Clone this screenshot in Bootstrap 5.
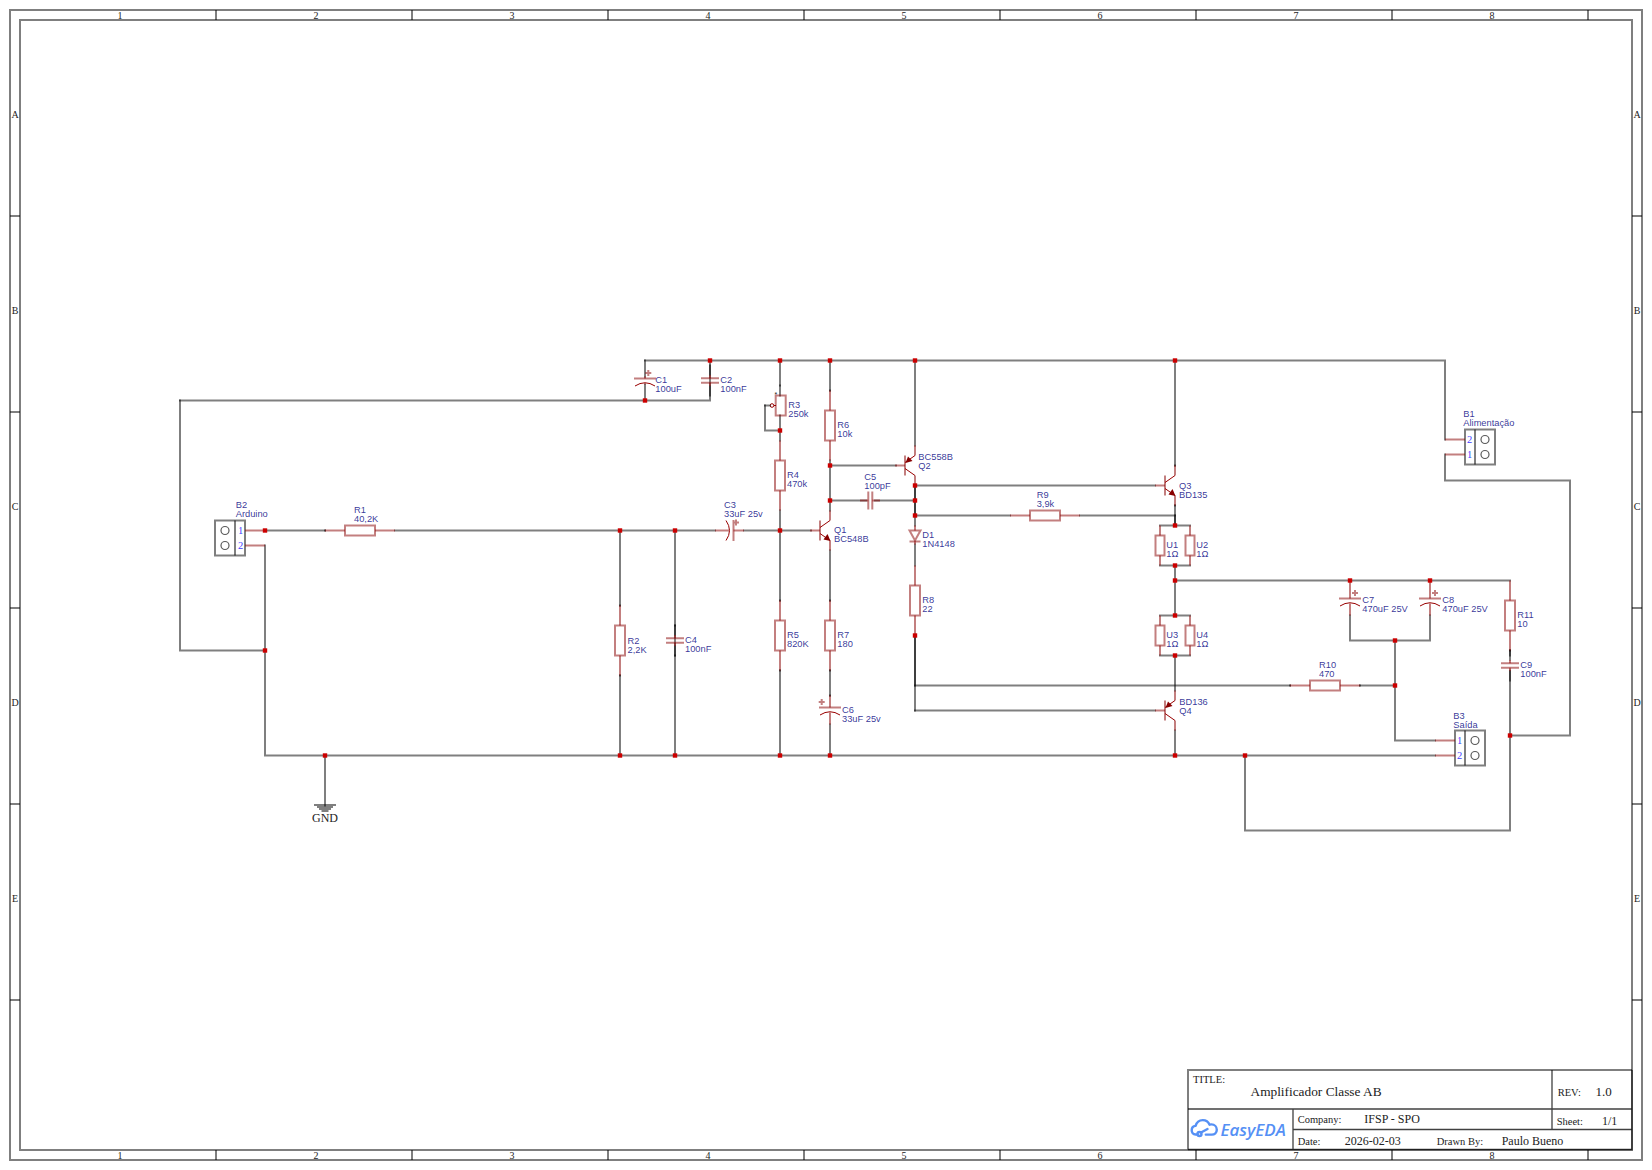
<!DOCTYPE html>
<html lang="pt">
<head>
  <meta charset="UTF-8" />
  <title>Amplificador Classe AB</title>
  <link href="https://cdn.jsdelivr.net/npm/bootstrap@5.3.3/dist/css/bootstrap.min.css" rel="stylesheet"/>
  <style>
    .sheet-svg { width: 1652px; height: 1170px; }
    .wire { stroke: #000; stroke-opacity: .5; stroke-width: 2; fill: none; stroke-linecap: square; }
    .pin { stroke: #800; stroke-opacity: .5; stroke-width: 2; fill: none; }
    .body-line { stroke: #800; stroke-opacity: .5; stroke-width: 2; fill: none; }
    .thin-line { stroke: #900; stroke-width: 1; fill: none; }
    .node { fill: #c00; }
    .frame-line { stroke: #000; stroke-opacity: .5; stroke-width: 2; fill: none; }
    .block-line { stroke: #000; stroke-opacity: .75; stroke-width: 1.3; fill: none; }
    .part-label { font: 9.3px "Liberation Sans", Arial, sans-serif; fill: #000080; fill-opacity: .8; }
    .pin-num { font: 10.5px "Liberation Serif", serif; fill: #00f; fill-opacity: .8; text-anchor: middle; }
    .sheet-text { font-family: "Liberation Serif", serif; fill: #222; }
    .logo-text { font: italic 600 17px "Open Sans", sans-serif; fill: #5590f5; }
  </style>
</head>
<body class="m-0 bg-white overflow-hidden">
  <svg class="sheet-svg d-block" id="sheet" viewBox="0 0 1652 1170" xmlns="http://www.w3.org/2000/svg">
    <g id="frame"></g>
    <g transform="translate(0 .5)">
      <g id="wires"></g>
      <g id="parts"></g>
      <g id="nodes"></g>
    </g>
    <g id="labels" transform="translate(0 .5)"></g>
    <g id="title-block" transform="translate(0 .5)">
      <path class="frame-line" d="M1188 1149V1069.5H1632"/>
      <path class="block-line" d="M1188 1149H1632V1069.5M1188 1108.5H1632M1293 1108.5V1149M1293 1129H1632M1552 1069.5V1129"/>
      <text class="sheet-text" x="1193" y="1082" font-size="10.5">TITLE:</text>
      <text class="sheet-text" x="1250.5" y="1095.5" font-size="13.33">Amplificador Classe AB</text>
      <text class="sheet-text" x="1557.7" y="1095.5" font-size="10.5">REV:</text>
      <text class="sheet-text" x="1595.5" y="1095.5" font-size="13">1.0</text>
      <text class="sheet-text" x="1297.7" y="1122" font-size="10.5">Company:</text>
      <text class="sheet-text" x="1364.3" y="1122" font-size="12">IFSP - SPO</text>
      <text class="sheet-text" x="1556.7" y="1124" font-size="10.5">Sheet:</text>
      <text class="sheet-text" x="1602" y="1124" font-size="12">1/1</text>
      <text class="sheet-text" x="1297.7" y="1144" font-size="10.5">Date:</text>
      <text class="sheet-text" x="1344.7" y="1144" font-size="12">2026-02-03</text>
      <text class="sheet-text" x="1436.7" y="1144" font-size="10.5">Drawn By:</text>
      <text class="sheet-text" x="1501.7" y="1144" font-size="12">Paulo Bueno</text>
      <!-- EasyEDA logo -->
      <g fill="none" stroke="#5590f5" stroke-width="2.4" stroke-linecap="round" stroke-linejoin="round">
        <path d="M1197.5 1134h-2c-2.4 0-3.8-2-3.8-4.2 0-2.4 1.6-4.2 3.9-4.4 1-3.6 3.8-5.8 7.2-5.8 3 0 5.6 1.8 6.8 4.6 .6-.2 1.2-.3 1.8-.3 3.2 0 5.4 2.4 5.4 5.4s-2.2 4.8-5 4.8h-6"/>
        <path d="M1201 1132l6.5-3.5"/>
        <circle cx="1199.5" cy="1133.5" r="2"/>
      </g>
      <text class="logo-text" x="1220.5" y="1135.5">EasyEDA</text>
    </g>
  </svg>

  <script src="https://cdn.jsdelivr.net/npm/bootstrap@5.3.3/dist/js/bootstrap.bundle.min.js"></script>
  <script>
    const NS = 'http://www.w3.org/2000/svg';
    const frame = document.getElementById('frame');
    const wires = document.getElementById('wires');
    const parts = document.getElementById('parts');
    const nodes = document.getElementById('nodes');
    const labels = document.getElementById('labels');

    function el(parent, tag, attrs, text) {
      const e = document.createElementNS(NS, tag);
      for (const k in attrs) e.setAttribute(k, attrs[k]);
      if (text !== undefined) e.textContent = text;
      parent.appendChild(e);
      return e;
    }
    const path = (parent, cls, d) => el(parent, 'path', { class: cls, d });

    function label(x, y, a, b) {
      el(labels, 'text', { class: 'part-label', x, y }, a);
      if (b) el(labels, 'text', { class: 'part-label', x, y: y + 9 }, b);
    }

    // sheet frame, ticks and grid letters
    el(frame, 'rect', { class: 'frame-line', x: 10, y: 10, width: 1632, height: 1150 });
    el(frame, 'rect', { class: 'frame-line', x: 20, y: 20, width: 1612, height: 1130 });
    for (let i = 0; i < 8; i++) {
      const x = 216 + i * 196;
      path(frame, 'frame-line', `M${x} 10V20M${x} 1150V1160`);
      el(frame, 'text', { class: 'sheet-text', x: 120 + i * 196, y: 19, 'font-size': 10, 'text-anchor': 'middle' }, i + 1);
      el(frame, 'text', { class: 'sheet-text', x: 120 + i * 196, y: 1159, 'font-size': 10, 'text-anchor': 'middle' }, i + 1);
    }
    'ABCDE'.split('').forEach((c, i) => {
      const y = 216 + i * 196;
      path(frame, 'frame-line', `M10 ${y}H20M1632 ${y}H1642`);
      el(frame, 'text', { class: 'sheet-text', x: 15, y: 118 + i * 196, 'font-size': 10, 'text-anchor': 'middle' }, c);
      el(frame, 'text', { class: 'sheet-text', x: 1637, y: 118 + i * 196, 'font-size': 10, 'text-anchor': 'middle' }, c);
    });

    // wires
    [
      'M645 360H1445V439', 'M1445 454V480H1570V735H1510',
      'M180 400H710V360', 'M180 400V650H265',
      'M265 530H325', 'M395 530H715', 'M744 530H811',
      'M265 545V755H1435', 'M620 530V605', 'M620 675V755',
      'M675 530V755', 'M645 360V376', 'M645 384V400',
      'M780 360V395', 'M780 415V440', 'M780 510V600', 'M780 670V755',
      'M765 405V430H780',
      'M830 360V390', 'M830 460V510', 'M830 550V600', 'M830 670V695', 'M830 724V755',
      'M830 465H896', 'M830 500H866', 'M875 500H915',
      'M915 360V445', 'M915 485V525', 'M915 485V515', 'M915 544V565', 'M915 635V710', 'M915 635V685',
      'M915 485H1155', 'M915 515H1010', 'M1080 515H1175',
      'M1175 360V465', 'M1175 505V525', 'M1175 515V525',
      'M1160 525H1190', 'M1160 565H1190', 'M1175 565V615',
      'M1160 615H1190', 'M1160 655H1190', 'M1175 655V690', 'M1175 730V755',
      'M1175 580H1510', 'M915 685H1290', 'M1360 685H1395', 'M915 710H1155',
      'M1350 615V640H1430V615', 'M1395 640V740H1435',
      'M1245 755V830H1510V670', 'M1510 650V655',
      'M325 755V805'
    ].forEach(d => path(wires, 'wire', d));

    // where a pin end meets a wire the two half-transparent strokes darken
    [[325,530],[620,605],[620,675],[675,625],[675,655],[780,385],[830,390],[780,600],[830,600],[780,670],[830,670],[830,695],
     [1175,465],[1175,505],[1510,650],[1290,685],[1360,685]].forEach(([x, y]) => {
      el(wires, 'rect', { x: x - 1, y: y - 1, width: 2, height: 2, fill: '#000', 'fill-opacity': .5 });
    });

    function resistorV(x, top, h, pin, w) {
      w = w || 10;
      if (pin) path(parts, 'pin', `M${x} ${top - pin}V${top}M${x} ${top + h}V${top + h + pin}`);
      el(parts, 'rect', { class: 'body-line', x: x - w / 2, y: top, width: w, height: h });
    }
    function resistorH(left, y) {
      path(parts, 'pin', `M${left - 20} ${y}H${left}M${left + 30} ${y}H${left + 50}`);
      el(parts, 'rect', { class: 'body-line', x: left, y: y - 5, width: 30, height: 10 });
    }
    function capV(x, y) {
      path(parts, 'pin', `M${x} ${y - 5.5}V${y - 2.3}M${x} ${y + 2.3}V${y + 5.5}`);
      path(parts, 'body-line', `M${x - 9} ${y - 2.3}H${x + 9}M${x - 9} ${y + 2.3}H${x + 9}`);
      path(wires, 'wire', `M${x} ${y - 15}V${y - 6}M${x} ${y + 6}V${y + 15}`);
    }
    // polarised cap: flat plate on top, curved plate under it
    function polarV(x, y, plusX, pinUp, pinDown) {
      path(parts, 'pin', `M${x} ${y - pinUp}V${y}M${x} ${y + 5}V${y + pinDown}`);
      path(parts, 'body-line', `M${x - 11} ${y}H${x + 11}`);
      path(parts, 'thin-line', `M${x - 10} ${y + 7.5}Q${x} ${y + 1} ${x + 10} ${y + 7.5}`);
      path(parts, 'body-line', `M${plusX - 3} ${y - 5.5}h6M${plusX} ${y - 8.5}v6`);
    }
    function transistor(x, y, npn) {
      // x = bar, y = base height, collector/emitter rail at x + 10
      const r = x + 10;
      path(parts, 'pin', `M${x - 10} ${y}H${x}`);
      path(parts, 'body-line', `M${x} ${y - 10}V${y + 10}`);
      path(parts, 'pin', `M${r} ${y - 20}V${y - 10}M${r} ${y + 10}V${y + 20}`);
      path(parts, 'thin-line', `M${x} ${y - 3}L${r} ${y - 10}M${x} ${y + 3}L${r} ${y + 10}`);
      if (npn) {
        el(parts, 'polygon', { points: `${r + .5},${y + 10.5} ${r - 6.5},${y + 9} ${r - 2.5},${y + 3.5}`, fill: '#800' });
      } else {
        el(parts, 'polygon', { points: `${x + .5},${y - 2.5} ${x + 3},${y - 9} ${x + 7.5},${y - 4.5}`, fill: '#800' });
      }
    }
    function connector(x, y, nums, numSide) {
      // x,y = outer box corner, 30 x 35
      el(parts, 'rect', { class: 'frame-line', x, y, width: 30, height: 35 });
      const div = numSide === 'left' ? x + 10 : x + 20;
      const cx = numSide === 'left' ? x + 20 : x + 10;
      const nx = numSide === 'left' ? x + 4.5 : x + 25.5;
      path(parts, 'frame-line', `M${div} ${y}V${y + 35}`);
      [[10, nums[0]], [25, nums[1]]].forEach(([dy, n]) => {
        el(parts, 'circle', { cx, cy: y + dy, r: 4, fill: 'none', stroke: '#000', 'stroke-opacity': .65, 'stroke-width': 1.2 });
        el(parts, 'text', { class: 'pin-num', x: nx, y: y + dy + 3.5 }, n);
      });
    }

    // connectors
    connector(215, 520, ['1', '2'], 'right');
    path(parts, 'pin', 'M245 530H265M245 545H265');
    label(235.7, 507.7, 'B2', 'Arduino');
    connector(1465, 429, ['2', '1'], 'left');
    path(parts, 'pin', 'M1445 439H1465M1445 454H1465');
    label(1463.3, 416.7, 'B1', 'Alimentação');
    connector(1455, 730, ['1', '2'], 'left');
    path(parts, 'pin', 'M1435 740H1455M1435 755H1455');
    label(1453.3, 718, 'B3', 'Saída');

    // resistors
    resistorH(345, 530); label(354, 512.7, 'R1', '40,2K');
    resistorV(620, 625, 30, 20); label(627.5, 643, 'R2', '2,2K');
    resistorV(780.7, 395, 20, 0); label(788.3, 407.7, 'R3', '250k');
    path(parts, 'thin-line', 'M772 405H776');
    el(parts, 'circle', { cx: 772, cy: 405, r: 1.8, fill: '#fff', stroke: '#900', 'stroke-width': 1 });
    path(parts, 'wire', 'M765 405H770');
    el(parts, 'text', { x: 774.5, y: 396, 'font-size': 7, 'font-family': 'Liberation Sans, sans-serif', fill: '#222' }, '*');
    resistorV(780, 460, 30, 20); label(787, 477.7, 'R4', '470k');
    resistorV(780, 620, 30, 20); label(787, 637.7, 'R5', '820K');
    resistorV(830, 410, 30, 20); label(837.3, 427.7, 'R6', '10k');
    resistorV(830, 620, 30, 20); label(837.3, 637.7, 'R7', '180');
    resistorV(915, 585, 30, 20); label(922.3, 602.7, 'R8', '22');
    resistorH(1030, 515); label(1036.7, 497.7, 'R9', '3,9k');
    resistorH(1310, 685); label(1319, 667.7, 'R10', '470');
    resistorV(1510, 600, 30, 20); label(1517.3, 617.7, 'R11', '10');
    resistorV(1160, 535, 20, 10, 9); label(1166.3, 547.7, 'U1', '1Ω');
    resistorV(1190, 535, 20, 10, 9); label(1196.3, 547.7, 'U2', '1Ω');
    resistorV(1160, 625, 20, 10, 9); label(1166.3, 637.7, 'U3', '1Ω');
    resistorV(1190, 625, 20, 10, 9); label(1196.3, 637.7, 'U4', '1Ω');

    // capacitors
    polarV(645, 378, 648.3, 2, 6); label(655.3, 382.7, 'C1', '100uF');
    capV(710, 380); label(720.3, 382.7, 'C2', '100nF');
    capV(675, 640); label(685, 642.7, 'C4', '100nF');
    polarV(830, 707, 821.7, 12, 17); label(842, 712.7, 'C6', '33uF 25v');
    polarV(1350, 598, 1355, 18, 17); label(1362.3, 602.7, 'C7', '470uF 25V');
    polarV(1430, 598, 1435, 18, 17); label(1442.3, 602.7, 'C8', '470uF 25V');
    capV(1510, 665); label(1520.3, 667.7, 'C9', '100nF');
    // C3 lies on its side
    path(parts, 'pin', 'M715 530H729M733.5 530H744');
    path(parts, 'thin-line', 'M726 520Q733 530 726 540');
    path(parts, 'body-line', 'M733.5 519.5V540.5M733 522h6M736 519v6');
    label(724, 507.7, 'C3', '33uF 25v');
    // C5 too
    path(parts, 'pin', 'M860 500H868.3M872.3 500H880');
    path(parts, 'body-line', 'M868.3 491V509M872.3 491V509');
    label(864.3, 479.7, 'C5', '100pF');

    // diode
    path(parts, 'pin', 'M915 525V530M915 540V544');
    path(parts, 'body-line', 'M909.5 530H920.5L915 540ZM909.5 541H920.5');
    label(922.3, 537.7, 'D1', '1N4148');

    // transistors
    transistor(820, 530, true); label(834, 532.7, 'Q1', 'BC548B');
    transistor(905, 465, false); label(918.3, 459.3, 'BC558B', 'Q2');
    transistor(1165, 485, true); label(1179, 488, 'Q3', 'BD135');
    transistor(1165, 710, false); label(1179.3, 704.7, 'BD136', 'Q4');

    // ground
    [[20, 804.5], [14, 806.5], [10, 808.5], [5, 810.5]].forEach(([w, y]) => {
      path(parts, 'wire', `M${325 - w / 2} ${y}H${325 + w / 2}`);
    });
    el(labels, 'text', { class: 'sheet-text', x: 325, y: 821, 'font-size': 12, 'text-anchor': 'middle' }, 'GND');

    // junction dots
    [[645,400],[710,360],[780,360],[830,360],[915,360],[1175,360],[780,430],[830,465],[830,500],
     [915,485],[915,500],[915,515],[780,530],[675,530],[620,530],[265,530],[265,650],[915,635],
     [1175,525],[1175,565],[1175,580],[1175,615],[1175,655],[1350,580],[1430,580],[1395,640],[1395,685],
     [325,755],[620,755],[675,755],[780,755],[830,755],[1175,755],[1245,755],[1510,735]].forEach(([x, y]) => {
      el(nodes, 'rect', { class: 'node', x: x - 2.2, y: y - 2.2, width: 4.4, height: 4.4 });
    });
  </script>
</body>
</html>
